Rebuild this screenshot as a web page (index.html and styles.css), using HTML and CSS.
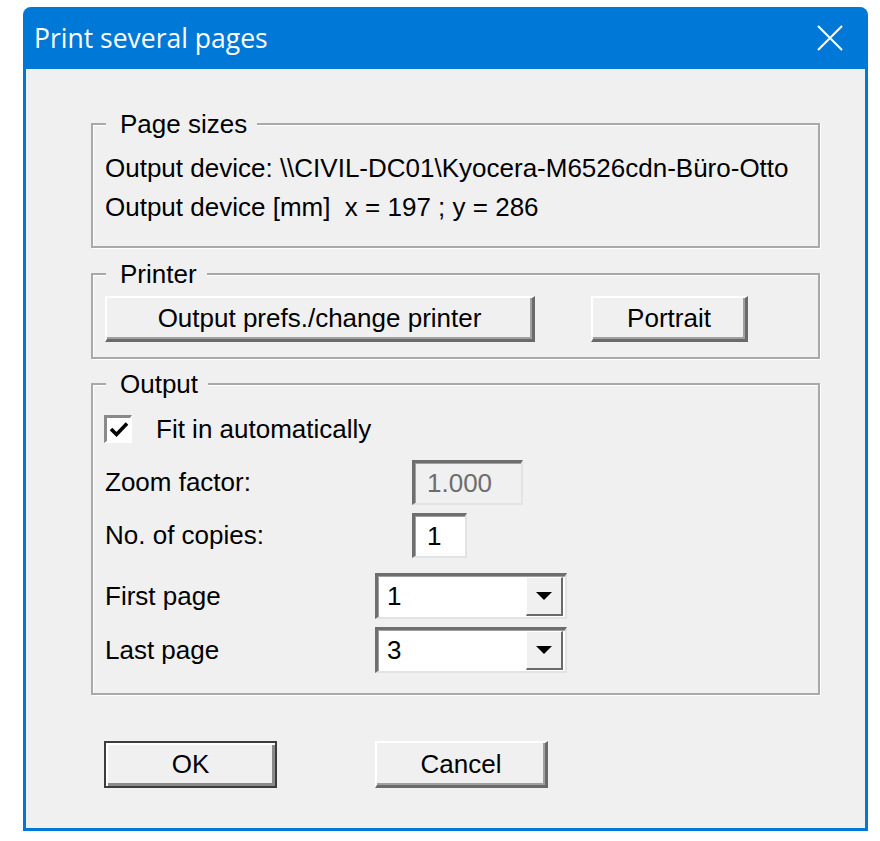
FILE: index.html
```html
<!DOCTYPE html>
<html>
<head>
  <title>Print several pages</title>
  <link rel="stylesheet" href="styles.css">
</head>
<body>
  <div class="window">
    <div class="titlebar">
      <span class="title">Print several pages</span>
      <svg class="close" width="26" height="26" viewBox="0 0 26 26">
        <path d="M1 1 L25 25 M25 1 L1 25" stroke="#fff" stroke-width="2" fill="none" />
      </svg>
    </div>

    <div class="client">
      <div class="group group-sizes">
        <div class="group-title">Page sizes</div>
        <div class="lines">
          <div>Output device: \\CIVIL-DC01\Kyocera-M6526cdn-Büro-Otto</div>
          <div>Output device [mm]&nbsp; x = 197 ; y = 286</div>
        </div>
      </div>

      <div class="group group-printer">
        <div class="group-title">Printer</div>
        <div class="printer-row">
          <button class="btn btn-prefs">Output prefs./change printer</button>
          <button class="btn btn-portrait">Portrait</button>
        </div>
      </div>

      <div class="group group-output">
        <div class="group-title">Output</div>

        <div class="row row-check">
          <span class="checkbox">
            <svg width="20" height="18" viewBox="0 0 20 18">
              <path d="M2 8 L7.5 13.5 L18 2.5" stroke="#000" stroke-width="3.6" fill="none" />
            </svg>
          </span>
          <span>Fit in automatically</span>
        </div>

        <div class="row row-zoom">
          <span class="label label-input">Zoom factor:</span>
          <span class="field field-zoom field-disabled">1.000</span>
        </div>

        <div class="row row-copies">
          <span class="label label-input">No. of copies:</span>
          <span class="field field-copies">1</span>
        </div>

        <div class="row row-first">
          <span class="label label-select">First page</span>
          <span class="combo">
            <span class="combo-value">1</span>
            <span class="combo-btn"><span class="arrow"></span></span>
          </span>
        </div>

        <div class="row row-last">
          <span class="label label-select">Last page</span>
          <span class="combo">
            <span class="combo-value">3</span>
            <span class="combo-btn"><span class="arrow"></span></span>
          </span>
        </div>
      </div>

      <div class="actions">
        <button class="btn btn-ok">OK</button>
        <button class="btn btn-cancel">Cancel</button>
      </div>
    </div>
  </div>
</body>
</html>
```

FILE: styles.css
```css
body {
  margin: 0;
  background: #fff;
  font-family: "Liberation Sans", Arial, sans-serif;
  font-size: 26px;
  color: #000;
}
.window {
  width: 845px;
  margin: 7px 0 0 23px;
  border: 3px solid #0078d7;
  border-top: none;
  border-radius: 8px 8px 0 0;
  background: #0078d7;
  box-sizing: border-box;
}
.titlebar {
  height: 62px;
  display: flex;
  align-items: center;
  justify-content: space-between;
  padding: 0 22px 0 8px;
  color: #fff;
}
.title {
  font-family: "Open Sans", "Noto Sans", sans-serif;
  font-size: 26.5px;
}
.close {
  display: block;
}
.client {
  background: #f0f0f0;
  padding: 54px 45px 40px 65px;
}
.group {
  border: 2px solid #a9a9a9;
  box-shadow: 1px 1px 0 #fff, inset 1px 1px 0 #fff;
  padding: 0 12px;
}
.group-title {
  width: max-content;
  margin: -16px 0 0 1px;
  padding: 0 10px 0 14px;
  line-height: 30px;
  background: #f0f0f0;
}
.group-sizes {
  padding-bottom: 19px;
}
.lines {
  margin-top: 10px;
  line-height: 39px;
}
.group-printer {
  margin-top: 25px;
  padding-bottom: 15px;
}
.printer-row {
  margin-top: 7px;
  display: flex;
  gap: 56px;
}
.btn {
  font-family: "Liberation Sans", Arial, sans-serif;
  font-size: 26px;
  color: #000;
  background: #f0f0f0;
  height: 46px;
  padding: 0;
  border-style: solid;
  border-width: 2px 3px 3px 2px;
  border-color: #fff #6a6a6a #6a6a6a #fff;
  box-shadow: inset -2px -2px 0 #a0a0a0;
  box-sizing: border-box;
}
.btn-prefs {
  width: 430px;
}
.btn-portrait {
  width: 157px;
}
.group-output {
  margin-top: 24px;
  padding-bottom: 20px;
}
.row {
  display: flex;
  align-items: center;
}
.row-check {
  margin: 16px 0 0 -1px;
  height: 28px;
  gap: 24px;
}
.checkbox {
  width: 28px;
  height: 28px;
  box-sizing: border-box;
  background: #fff;
  border-style: solid;
  border-width: 3px 2px 2px 3px;
  border-color: #8a8a8a #fff #fff #8a8a8a;
  display: flex;
  align-items: center;
  justify-content: center;
}
.checkbox svg {
  display: block;
}
.label-input {
  width: 307px;
}
.label-select {
  width: 270px;
}
.field {
  height: 45px;
  box-sizing: border-box;
  padding-left: 12px;
  line-height: 40px;
  background: #fff;
  border-style: solid;
  border-width: 3px 2px 2px 3px;
  border-color: #6e6e6e #e3e3e3 #e3e3e3 #6e6e6e;
  box-shadow: inset 1px 1px 0 #a0a0a0;
}
.field-disabled {
  background: #f0f0f0;
  color: #6d6d6d;
}
.row-zoom {
  margin-top: 17px;
}
.field-zoom {
  width: 111px;
}
.row-copies {
  margin-top: 8px;
}
.field-copies {
  width: 55px;
}
.row-first {
  margin-top: 15px;
}
.row-last {
  margin-top: 8px;
}
.combo {
  width: 192px;
  height: 46px;
  box-sizing: border-box;
  display: flex;
  align-items: center;
  justify-content: space-between;
  background: #fff;
  border-style: solid;
  border-width: 3px 2px 2px 3px;
  border-color: #6e6e6e #e3e3e3 #e3e3e3 #6e6e6e;
  box-shadow: inset 1px 1px 0 #a0a0a0;
  padding: 1px 2px 1px 9px;
}
.combo-btn {
  width: 37px;
  height: 39px;
  box-sizing: border-box;
  background: #f0f0f0;
  border-style: solid;
  border-width: 1px 2px 2px 1px;
  border-color: #fff #6a6a6a #6a6a6a #fff;
  display: flex;
  align-items: center;
  justify-content: center;
}
.arrow {
  width: 0;
  height: 0;
  border-left: 8px solid transparent;
  border-right: 8px solid transparent;
  border-top: 8px solid #000;
}
.actions {
  margin-top: 46px;
  margin-left: 13px;
  display: flex;
  gap: 98px;
}
.btn-ok,
.btn-cancel {
  width: 173px;
  height: 47px;
}
.btn-ok {
  border: 2px solid #3c3c3c;
  box-shadow: inset 2px 2px 0 #fff, inset -3px -3px 0 #8a8a8a;
}
```
